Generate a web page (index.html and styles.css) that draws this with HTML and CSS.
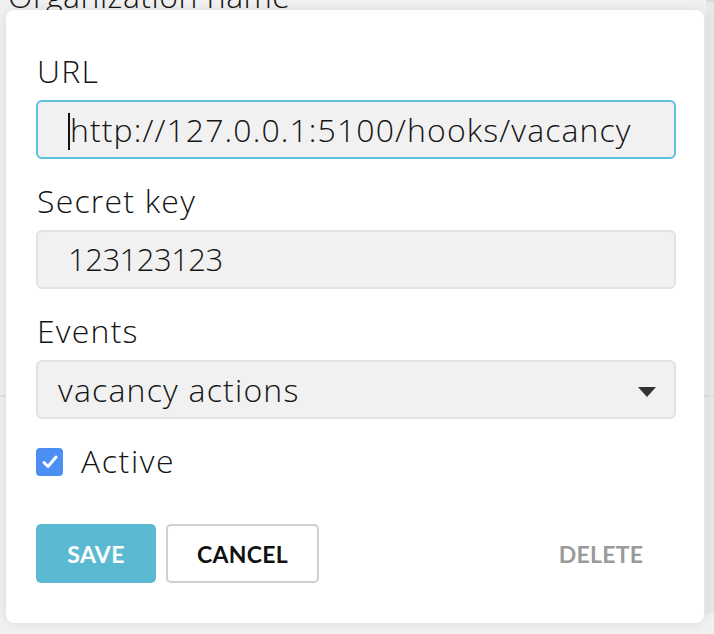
FILE: index.html
```html
<!DOCTYPE html>
<html>
<head>
<meta charset="utf-8">
<link rel="stylesheet" href="styles.css">
</head>
<body>
<div class="page">
  <div class="page-title">Organization name</div>
  <div class="page-side"></div>
  <div class="page-rule"></div>
</div>
<div class="modal">
  <div class="field">
    <div class="label">URL</div>
    <div class="input focused"><span class="caret"></span>http://127.0.0.1:5100/hooks/vacancy</div>
  </div>
  <div class="field">
    <div class="label">Secret key</div>
    <div class="input input-digits">123123123</div>
  </div>
  <div class="field">
    <div class="label">Events</div>
    <div class="select"><span>vacancy actions</span><span class="arrow"></span></div>
  </div>
  <div class="check-row">
    <span class="checkbox"><svg width="18" height="16" viewBox="0 0 18 16"><path d="M3 8.5 L7 12.5 L15 3" fill="none" stroke="#fff" stroke-width="3" stroke-linecap="round" stroke-linejoin="round"/></svg></span>
    <span class="check-label">Active</span>
  </div>
  <div class="actions">
    <button class="btn btn-save">Save</button>
    <button class="btn btn-cancel">Cancel</button>
    <button class="btn btn-delete">Delete</button>
  </div>
</div>
</body>
</html>
```
FILE: styles.css
```css
html, body {
  margin: 0;
  padding: 0;
}
body {
  width: 714px;
  height: 634px;
  overflow: hidden;
  background: #f1f1f1;
  font-family: "Open Sans", "Lato", sans-serif;
  font-weight: 300;
  color: #151515;
  position: relative;
}
.page {
  height: 634px;
  position: relative;
}
.page-title {
  font-size: 32px;
  line-height: 36px;
  margin-top: -22px;
  padding-left: 8px;
  letter-spacing: 0.5px;
}
.page-side {
  position: absolute;
  left: 706px;
  top: 22px;
  width: 8px;
  height: 612px;
  background: #e8e8e8;
  border-top: 2px solid #dcdcdc;
}
.page-rule {
  position: absolute;
  left: 0;
  top: 417px;
  width: 714px;
  height: 2px;
  background: #e0e0e0;
}
.modal {
  position: absolute;
  left: 6px;
  top: 10px;
  width: 698px;
  height: 613px;
  box-sizing: border-box;
  background: #fff;
  border-radius: 8px;
  box-shadow: 0 0 12px rgba(0, 0, 0, 0.10);
  padding: 43px 28px 40px 30px;
  display: flex;
  flex-direction: column;
}
.field {
  display: flex;
  flex-direction: column;
  gap: 12px;
  margin-bottom: 24px;
}
.label {
  font-size: 32px;
  line-height: 35px;
  letter-spacing: 1.2px;
  padding-left: 1px;
}
.input {
  height: 59px;
  box-sizing: border-box;
  border: 2px solid #e2e2e2;
  border-radius: 6px;
  background: #f1f1f1;
  padding-left: 30px;
  font-size: 32px;
  line-height: 55px;
  letter-spacing: 1.1px;
  white-space: nowrap;
}
.input-digits {
  font-size: 31px;
  letter-spacing: -0.5px;
}
.input.focused {
  border-color: #5bc0de;
}
.caret {
  display: inline-block;
  width: 2px;
  height: 37px;
  background: #111;
  vertical-align: -8px;
}
.select {
  height: 59px;
  box-sizing: border-box;
  border: 2px solid #e2e2e2;
  border-radius: 6px;
  background: #f1f1f1;
  padding: 0 18px 0 20px;
  font-size: 32px;
  letter-spacing: 1.2px;
  display: flex;
  align-items: center;
  justify-content: space-between;
}
.arrow {
  width: 0;
  height: 0;
  margin-top: 5px;
  border-left: 9px solid transparent;
  border-right: 9px solid transparent;
  border-top: 10px solid #333;
}
.check-row {
  display: flex;
  align-items: center;
  gap: 18px;
  margin-top: 5px;
  height: 28px;
}
.checkbox {
  width: 27px;
  height: 28px;
  border-radius: 4px;
  background: #4b8ff5;
  display: flex;
  align-items: center;
  justify-content: center;
}
.check-label {
  font-size: 32px;
  letter-spacing: 1.6px;
  margin-top: -4px;
}
.actions {
  margin-top: auto;
  display: flex;
  gap: 10px;
}
.btn {
  height: 59px;
  box-sizing: border-box;
  padding: 0;
  border-radius: 5px;
  font-family: "Lato", sans-serif;
  font-weight: 700;
  font-size: 23px;
  text-transform: uppercase;
  letter-spacing: 0.3px;
  cursor: pointer;
}
.btn-save {
  background: #5bbad1;
  border: 0;
  color: #fff;
  width: 120px;
}
.btn-cancel {
  background: #fff;
  border: 2px solid #cfcfcf;
  color: #111;
  width: 153px;
}
.btn-delete {
  margin-left: auto;
  background: transparent;
  border: 0;
  color: #9a9a9a;
  width: 150px;
}
```
